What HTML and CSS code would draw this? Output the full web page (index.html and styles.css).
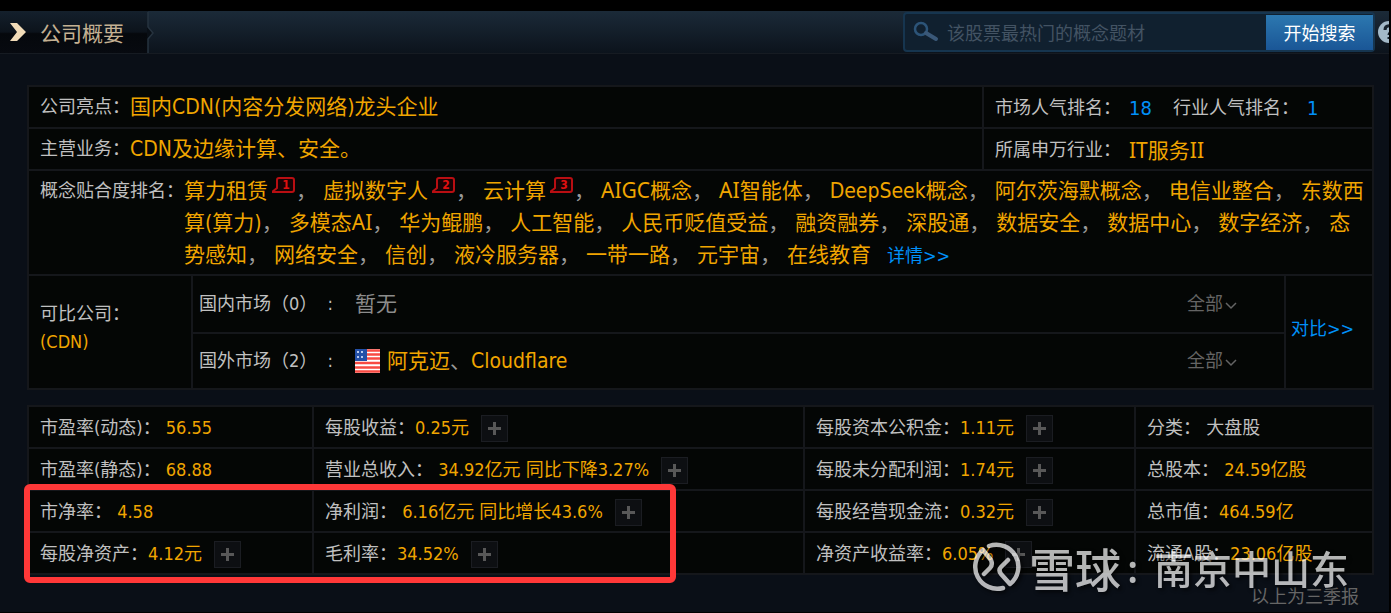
FILE: index.html
```html
<!DOCTYPE html>
<html lang="zh-CN">
<head>
<meta charset="utf-8">
<title>公司概要</title>
<link rel="stylesheet" href="styles.css">
</head>
<body>
<header class="bar">
  <div class="tab">
    <svg class="tab-arrow" width="16" height="18" viewBox="0 0 16 18" aria-hidden="true"><path d="M0 0H7L16 9L7 18H0L7 9Z" fill="#f2dcb8"/></svg>
    <h1 class="tab-title">公司概要</h1>
    <svg class="tab-edge" width="8" height="42" viewBox="0 0 8 42" aria-hidden="true"><path d="M0 16V28L6 22Z" fill="#090f16"/><path d="M1 1V16L6 22L1 28V42" fill="none" stroke="#26333f" stroke-width="1.500"/></svg>
  </div>
  <form class="search">
    <svg class="search-icon" width="26" height="22" viewBox="0 0 26 22" aria-hidden="true"><circle cx="8" cy="8" r="6" fill="none" stroke="#2c5478" stroke-width="2.500"/><path d="M13 12L23 18" stroke="#3a5878" stroke-width="4" stroke-linecap="round"/></svg>
    <input class="search-input" type="text" aria-label="搜索概念题材" placeholder="该股票最热门的概念题材">
    <button class="search-btn" type="button">开始搜索</button>
  </form>
  <button class="help" type="button" aria-label="帮助"><svg width="22" height="22" viewBox="0 0 22 22" aria-hidden="true"><circle cx="11" cy="11" r="11" fill="#a3b9c8"/><path d="M7 9C7 3.500 15 3.500 15 8C15 11 11 11 11 14M11 16V18" fill="none" stroke="#16222d" stroke-width="3"/></svg></button>
</header>

<main class="main">
  <section class="panel profile">
    <div class="split">
      <div class="cell"><span>公司亮点：</span><span class="val">国内CDN(内容分发网络)龙头企业</span></div>
      <div class="cell side"><span>市场人气排名：</span><a class="rank" href="#">18</a><span>行业人气排名：</span><a class="rank" href="#">1</a></div>
    </div>
    <div class="split">
      <div class="cell"><span>主营业务：</span><span class="val">CDN及边缘计算、安全。</span></div>
      <div class="cell side"><span>所属申万行业：</span><a class="val gap serif-i" href="#">IT服务II</a></div>
    </div>
    <div class="cell concepts">
      <span class="concept-label">概念贴合度排名：</span>
      <p class="concept-list">
        <a href="#">算力租赁</a><span class="badge"><svg width="24" height="16" viewBox="0 0 24 16" aria-hidden="true"><path d="M0 15L5 11V3Q5 1 7 1H20Q22 1 22 3V13Q22 15 20 15Z" fill="#180305" stroke="#b90e12" stroke-width="2"/></svg><b>1</b></span>，
        <a href="#">虚拟数字人</a><span class="badge"><svg width="24" height="16" viewBox="0 0 24 16" aria-hidden="true"><path d="M0 15L5 11V3Q5 1 7 1H20Q22 1 22 3V13Q22 15 20 15Z" fill="#180305" stroke="#b90e12" stroke-width="2"/></svg><b>2</b></span>，
        <a href="#">云计算</a><span class="badge"><svg width="24" height="16" viewBox="0 0 24 16" aria-hidden="true"><path d="M0 15L5 11V3Q5 1 7 1H20Q22 1 22 3V13Q22 15 20 15Z" fill="#180305" stroke="#b90e12" stroke-width="2"/></svg><b>3</b></span>，
        <a class="serif-i" href="#">AIGC概念</a>，
        <a class="serif-i" href="#">AI智能体</a>，
        <a href="#">DeepSeek概念</a>，
        <a href="#">阿尔茨海默概念</a>，
        <a href="#">电信业整合</a>，
        <a href="#">东数西算(算力)</a>，
        <a class="serif-i" href="#">多模态AI</a>，
        <a href="#">华为鲲鹏</a>，
        <a href="#">人工智能</a>，
        <a href="#">人民币贬值受益</a>，
        <a href="#">融资融券</a>，
        <a href="#">深股通</a>，
        <a href="#">数据安全</a>，
        <a href="#">数据中心</a>，
        <a href="#">数字经济</a>，
        <a href="#">态势感知</a>，
        <a href="#">网络安全</a>，
        <a href="#">信创</a>，
        <a href="#">液冷服务器</a>，
        <a href="#">一带一路</a>，
        <a href="#">元宇宙</a>，
        <a href="#">在线教育</a>
        <a class="more" href="#">详情&gt;&gt;</a>
      </p>
    </div>
    <div class="peers">
      <div class="peer-title"><span>可比公司：</span><span class="orange">(CDN)</span></div>
      <div class="markets">
        <div class="market"><span class="market-name">国内市场（0） &nbsp;:</span><span class="none">暂无</span><button class="all" type="button">全部<svg width="12" height="8" viewBox="0 0 12 8" aria-hidden="true"><path d="M1 1L6 6L11 1" fill="none" stroke="#646464" stroke-width="1.500"/></svg></button></div>
        <div class="market"><span class="market-name">国外市场（2） &nbsp;:</span><svg class="flag" width="25" height="24" viewBox="0 0 25 24" role="img" aria-label="美国"><path fill="#fff" d="M0 0H25V24H0Z"/><path d="M0 1.500H25M0 5.500H25M0 9.500H25M0 14H25M0 18.500H25M0 22.500H25" stroke="#f84a42" stroke-width="2.600"/><path fill="#2450a8" d="M0 0H12V12H0Z"/><path d="M2 3H10M2 8H10" stroke="#b9c9ee" stroke-width="2" stroke-dasharray="2 2"/></svg><a class="val" href="#">阿克迈</a><span class="sep">、</span><a class="val" href="#">Cloudflare</a><button class="all" type="button">全部<svg width="12" height="8" viewBox="0 0 12 8" aria-hidden="true"><path d="M1 1L6 6L11 1" fill="none" stroke="#646464" stroke-width="1.500"/></svg></button></div>
      </div>
      <a class="compare" href="#">对比&gt;&gt;</a>
    </div>
  </section>

  <div class="stats-wrap">
    <table class="panel stats">
      <colgroup><col class="c1"><col class="c2"><col class="c3"><col class="c4"></colgroup>
      <tr>
        <td>市盈率(动态)： <span class="orange">56.55</span></td>
        <td>每股收益：<span class="orange">0.25元</span><button class="plus" type="button" aria-label="展开每股收益"></button></td>
        <td>每股资本公积金：<span class="orange">1.11元</span><button class="plus" type="button" aria-label="展开每股资本公积金"></button></td>
        <td>分类： 大盘股</td>
      </tr>
      <tr>
        <td>市盈率(静态)： <span class="orange">68.88</span></td>
        <td>营业总收入： <span class="orange">34.92亿元 同比下降3.27%</span><button class="plus" type="button" aria-label="展开营业总收入"></button></td>
        <td>每股未分配利润：<span class="orange">1.74元</span><button class="plus" type="button" aria-label="展开每股未分配利润"></button></td>
        <td>总股本： <span class="orange">24.59亿股</span></td>
      </tr>
      <tr>
        <td>市净率： <span class="orange">4.58</span></td>
        <td>净利润： <span class="orange">6.16亿元 同比增长43.6%</span><button class="plus" type="button" aria-label="展开净利润"></button></td>
        <td>每股经营现金流：<span class="orange">0.32元</span><button class="plus" type="button" aria-label="展开每股经营现金流"></button></td>
        <td>总市值：<span class="orange">464.59亿</span></td>
      </tr>
      <tr>
        <td>每股净资产：<span class="orange">4.12元</span><button class="plus" type="button" aria-label="展开每股净资产"></button></td>
        <td>毛利率：<span class="orange">34.52%</span><button class="plus" type="button" aria-label="展开毛利率"></button></td>
        <td>净资产收益率：<span class="orange">6.05%</span><button class="plus" type="button" aria-label="展开净资产收益率"></button></td>
        <td>流通A股：<span class="orange">23.06亿股</span></td>
      </tr>
    </table>
    <div class="highlight"></div>
    <div class="watermark">
      <svg width="50" height="50" viewBox="0 0 50 50" aria-hidden="true"><g fill="none" stroke="#fff" stroke-width="4.500" stroke-linecap="round" stroke-linejoin="round"><path d="M18 4A22 22 0 0 1 39 42L30 32Q27 28 30 25L37 18"/><path d="M32 46A22 22 0 0 1 12 8L20 18Q22 23 19 26L13 32"/></g></svg>
      <span class="brand">雪球</span><span class="colon">:</span><span class="author">南京中山东</span>
    </div>
  </div>
  <p class="note">以上为三季报</p>
</main>
</body>
</html>
```
FILE: styles.css
```css
* { box-sizing: border-box; }
body {
  margin: 0;
  min-height: 100vh;
  overflow: hidden;
  background: #0a0f17;
  border: solid #000;
  border-width: 11px 2px 1px 0;
  color: #c0c0c0;
  font: 18px/28px "DejaVu Sans Condensed", "Noto Sans CJK SC", sans-serif;
}
a { color: inherit; text-decoration: none; }
button, input { font: inherit; color: inherit; border: 0; padding: 0; }
button { cursor: pointer; }

.bar {
  display: flex;
  align-items: center;
  height: 43px;
  overflow: hidden;
  background: linear-gradient(#1b2a38, #0c131c);
  border-bottom: 1px solid #161b22;
}
.tab {
  display: flex;
  align-items: center;
  height: 100%;
  padding-left: 10px;
  background: linear-gradient(#14202c, #0c131b 50%, #05080c 54%, #070a10);
}
.tab-title {
  margin: 0 23px 0 14px;
  padding-top: 3px;
  font-size: 21px;
  font-weight: 400;
  color: #c4b193;
}
.tab-edge { margin-right: -7px; }
.search {
  display: flex;
  align-items: center;
  width: 472px;
  height: 40px;
  margin-left: auto;
  padding-left: 8px;
  border: 2px solid #16354f;
  border-radius: 4px;
  background: #10202f;
}
.search-input {
  flex: 1;
  min-width: 0;
  height: 100%;
  margin-left: 8px;
  padding-top: 3px;
  background: none;
  outline: 0;
}
.search-input::placeholder { color: #435363; opacity: 1; }
.search-btn {
  width: 107px;
  height: 35px;
  padding-top: 3px;
  background: linear-gradient(#2c78b0, #1a5696);
  color: #fff;
}
.help {
  flex: none;
  width: 22px;
  height: 22px;
  margin: 0 -11px 0 3px;
  background: none;
}
.help svg { display: block; }

.main { padding: 31px 15px 0 27px; }
.panel { background: #040605; border: 2px solid #15171b; }
.val { font-size: 21px; color: #f0a500; }
.orange { color: #f0a500; }
.serif-i { font-family: "Noto Sans", "Noto Sans CJK SC", sans-serif; }

.split {
  display: grid;
  grid-template-columns: 1fr 390px;
  height: 42px;
  border-bottom: 2px solid #15171b;
}
.cell { display: flex; align-items: center; padding: 0 11px; white-space: nowrap; }
.side { padding-top: 2px; border-left: 2px solid #15171b; }
.rank { margin: 0 21px 0 8px; font-size: 20px; color: #0090f8; }
.gap { margin-left: 8px; }

.concepts {
  align-items: flex-start;
  padding: 4px 4px 3px 11px;
  border-bottom: 2px solid #15171b;
}
.concept-label { line-height: 32px; }
.concept-list {
  flex: 1;
  margin: 0;
  font-size: 21px;
  line-height: 32px;
  color: #999;
  white-space: normal;
}
.concept-list a { line-height: 20px; color: #f0a500; }
.concept-list .more { margin-left: 10px; font-size: 18px; color: #0090f8; }
.badge { position: relative; display: inline-block; width: 24px; height: 16px; margin-left: 4px; vertical-align: 5px; line-height: 16px; }
.badge svg { display: block; }
.badge b { position: absolute; inset: 0 0 0 4px; font-size: 12px; color: #e01010; text-align: center; }

.peers { display: flex; }
.peer-title { display: flex; flex-direction: column; justify-content: center; width: 162px; padding: 0 0 8px 11px; }
.markets { flex: 1; border: solid #15171b; border-width: 0 2px; }
.market { display: flex; align-items: center; height: 56px; padding-left: 6px; }
.market + .market { border-top: 2px solid #15171b; }
.market-name { width: 156px; white-space: nowrap; }
.none { font-size: 21px; color: #8c8c8c; }
.flag { margin-right: 7px; }
.sep { font-size: 21px; color: #999; }
.all { margin: 0 47px 0 auto; background: none; color: #646464; }
.all svg { margin-left: 2px; }
.compare { display: flex; align-items: center; width: 86px; padding: 0 0 6px 5px; color: #0090f8; }

.stats-wrap { position: relative; margin-top: 15px; }
.stats { width: 100%; table-layout: fixed; border-collapse: collapse; }
.stats td { height: 42px; padding: 2px 0 0 11px; border: 2px solid #15171b; white-space: nowrap; }
.c1 { width: 285px; }
.c2 { width: 491px; }
.c3 { width: 331px; }
.plus {
  width: 27px;
  height: 27px;
  margin-left: 12px;
  border: 1px solid #1b1d22;
  background:
    linear-gradient(#585858, #585858) center / 13px 3px no-repeat,
    linear-gradient(#585858, #585858) center / 3px 13px no-repeat,
    #0d0f12;
  vertical-align: middle;
}
.highlight {
  position: absolute;
  left: -3px;
  top: 79px;
  width: 652px;
  height: 99px;
  border: 6px solid #ff3838;
  border-radius: 6px;
}
.watermark {
  position: absolute;
  right: 25px;
  bottom: -17px;
  display: flex;
  align-items: center;
  height: 50px;
  color: #fff;
  opacity: .7;
  font-weight: 500;
  font-family: "Noto Sans CJK SC", sans-serif;
  filter: drop-shadow(2px 2px 2px #000);
  white-space: nowrap;
}
.brand { margin-left: 8px; font-size: 46px; }
.colon { width: 33px; padding-left: 6px; font-size: 38px; }
.author { font-size: 39px; }
.note { margin: 8px 15px 0 0; text-align: right; color: #666; }
```
